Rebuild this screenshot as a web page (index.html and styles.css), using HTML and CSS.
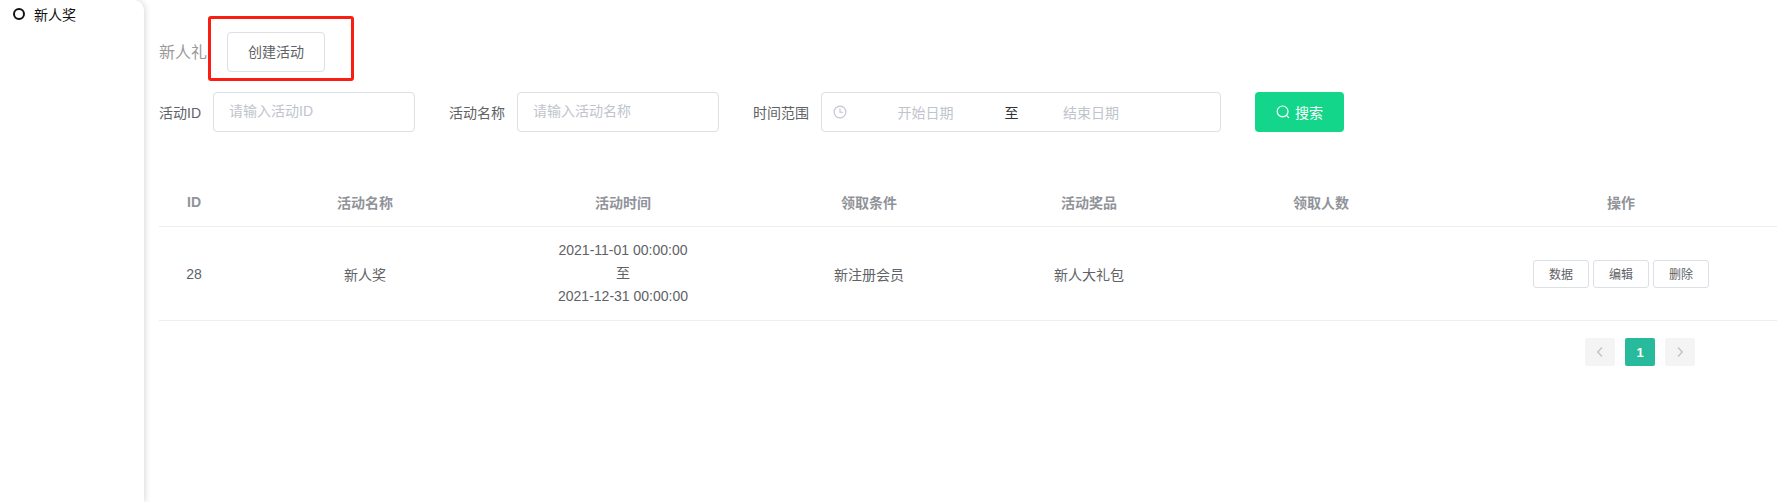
FILE: index.html
```html
<!DOCTYPE html>
<html lang="zh-CN">
<head>
<meta charset="utf-8">
<title>新人礼</title>
<link rel="stylesheet" href="styles.css">
</head>
<body>
<div class="app">
  <aside class="sidebar">
    <div class="side-item"><span class="radio"></span><span>新人奖</span></div>
  </aside>
  <main class="main">
    <div class="title-row">
      <span class="title">新人礼</span>
      <button class="btn-create">创建活动</button>
      <span class="highlight"></span>
    </div>
    <div class="filters">
      <label class="f-label">活动ID</label>
      <div class="input input-id">请输入活动ID</div>
      <label class="f-label">活动名称</label>
      <div class="input input-name">请输入活动名称</div>
      <label class="f-label">时间范围</label>
      <div class="range">
        <svg class="clock" viewBox="0 0 14 14" width="14" height="14"><circle cx="7" cy="7" r="5.9" fill="none" stroke="#c0c4cc" stroke-width="1.1"/><path d="M7 3.4V7.3H10.2" fill="none" stroke="#c0c4cc" stroke-width="1.1"/></svg>
        <span class="r-start">开始日期</span>
        <span class="r-sep">至</span>
        <span class="r-end">结束日期</span>
      </div>
      <button class="btn-search">
        <svg viewBox="0 0 14 14" width="14" height="14"><circle cx="6.6" cy="6.4" r="5.4" fill="none" stroke="#fff" stroke-width="1.2"/><path d="M10.5 10.3L13 12.8" fill="none" stroke="#fff" stroke-width="1.2"/></svg>
        <span>搜索</span>
      </button>
    </div>
    <div class="table">
      <div class="row head">
        <div>ID</div><div>活动名称</div><div>活动时间</div><div>领取条件</div><div>活动奖品</div><div>领取人数</div><div>操作</div>
      </div>
      <div class="row body">
        <div>28</div>
        <div>新人奖</div>
        <div class="times">2021-11-01 00:00:00<br>至<br>2021-12-31 00:00:00</div>
        <div>新注册会员</div>
        <div>新人大礼包</div>
        <div></div>
        <div class="ops"><button>数据</button><button>编辑</button><button>删除</button></div>
      </div>
    </div>
    <div class="pager">
      <span class="pg"><svg viewBox="0 0 10 12" width="10" height="12"><path d="M7 1.5L2.8 6L7 10.5" fill="none" stroke="#c0c4cc" stroke-width="1.5"/></svg></span>
      <span class="pg active">1</span>
      <span class="pg"><svg viewBox="0 0 10 12" width="10" height="12"><path d="M3 1.5L7.2 6L3 10.5" fill="none" stroke="#c0c4cc" stroke-width="1.5"/></svg></span>
    </div>
  </main>
</div>
</body>
</html>
```
FILE: styles.css
```css
* { box-sizing: border-box; }
html, body { margin: 0; height: 100%; background: #fff; overflow: hidden; }
body { font-family: "Liberation Sans", "Noto Sans CJK SC", sans-serif; font-size: 14px; color: #606266; }
button { font-family: inherit; cursor: pointer; }
.app { display: flex; height: 502px; }

.sidebar { width: 144px; flex: none; background: #fff; border-top-right-radius: 10px; box-shadow: 1px 0 6px rgba(0,0,0,.16); position: relative; z-index: 1; }
.side-item { display: flex; align-items: center; gap: 9px; height: 28px; padding-left: 13px; color: #111; }
.side-item span:last-child { padding-bottom: 1px; }
.radio { width: 12px; height: 12px; border: 2px solid #111; border-radius: 50%; }

.main { flex: 1; min-width: 0; padding: 32px 0 0 15px; }

.title-row { position: relative; display: flex; align-items: center; height: 40px; }
.title { font-size: 16px; color: #999; width: 68px; padding-bottom: 2px; }
.btn-create { width: 98px; height: 40px; background: #fff; border: 1px solid #dcdfe6; border-radius: 4px; color: #606266; font-size: 14px; padding: 0 0 2px; }
.highlight { position: absolute; left: 49px; top: -16px; width: 146px; height: 65px; border: 3px solid #fa1e12; border-radius: 3px; }

.filters { display: flex; align-items: center; height: 40px; margin-top: 20px; }
.f-label { margin-right: 12px; padding-bottom: 1px; }
.input { width: 202px; height: 40px; line-height: 37px; border: 1px solid #dcdfe6; border-radius: 4px; padding-left: 15px; color: #c0c4cc; margin-right: 34px; }
.range { width: 400px; height: 40px; border: 1px solid #dcdfe6; border-radius: 4px; display: grid; grid-template-columns: 25px 157px 15px 144px; align-items: center; color: #c0c4cc; padding-bottom: 1px; margin-right: 34px; }
.clock { justify-self: end; margin-right: 0; }
.r-start, .r-end { text-align: center; }
.r-sep { color: #303133; text-align: center; }
.btn-search { width: 89px; height: 40px; background: #13d68a; border: 0; border-radius: 4px; color: #fff; font-size: 14px; padding: 0; display: flex; align-items: center; justify-content: center; gap: 5px; }

.table { margin-top: 46px; }
.row { display: grid; grid-template-columns: 70px 272px 244px 248px 192px 272px 320px; border-bottom: 1px solid #ebeef5; align-items: center; text-align: center; }
.row > :last-child { padding-left: 8px; }
.head { height: 49px; font-weight: 700; color: #909399; }
.body { height: 94px; }
.times { line-height: 23px; }
.ops { display: flex; justify-content: center; gap: 4px; }
.ops button { width: 56px; height: 28px; background: #fff; border: 1px solid #dcdfe6; border-radius: 3px; color: #606266; font-size: 12px; padding: 0 0 1px; }

.pager { display: flex; justify-content: flex-end; gap: 10px; margin-top: 17px; padding-right: 82px; }
.pg { width: 30px; height: 28px; background: #f4f4f5; border-radius: 2px; display: flex; align-items: center; justify-content: center; font-size: 13px; font-weight: 700; }
.pg.active { background: #27ba9b; color: #fff; }
```
